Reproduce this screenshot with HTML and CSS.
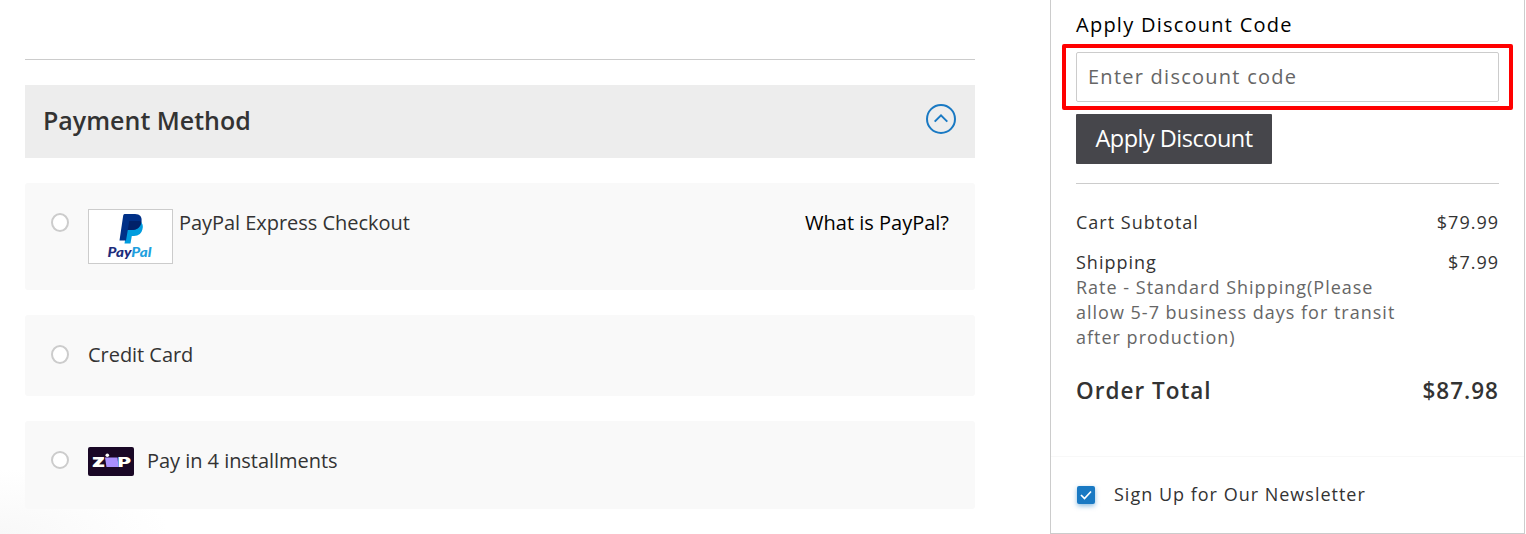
FILE: index.html
```html
<!DOCTYPE html>
<html lang="en">
<head>
    <meta charset="UTF-8">
    <meta name="viewport" content="width=device-width, initial-scale=1.0">
    <title>Checkout</title>

    <link rel="stylesheet" href="styles.css">
</head>
<body>
    <main class="checkout">
        <section class="payment">
            <div class="payment-header">
                <h2>Payment Method</h2>
                <svg class="toggle" width="32" height="32" viewBox="0 0 32 32" fill="none" stroke="#1979c3" stroke-width="2">
                    <circle cx="16" cy="16" r="14"/>
                    <path d="M9.700 18.600 16 12.300l6.300 6.300"/>
                </svg>
            </div>

            <div class="method method-paypal">
                <span class="radio"></span>
                <svg class="paypal-logo" width="85" height="55" viewBox="0 0 85 55">
                    <rect x=".5" y=".5" width="84" height="54" fill="#fff" stroke="#ccc"/>
                    <path fill="#009cde" d="M52 12q4 3 2.400 8.500q-1.500 6.500-8.400 6.500h-2.200l-1.300 7.500h-6l2.500-15z"/>
                    <path fill="#003087" d="M36.500 5h10.500c5 0 7.300 3 6.500 7.500c-1 6-4.500 8.500-10 8.500h-3.700l-1.800 10.500h-6.500l3.700-25q.2-1.500 1.300-1.500z"/>
                    <path fill="#012169" d="M41.300 12h9q2 0 3.200.8c-1 5.700-4.500 8.200-10 8.200h-3.700z"/>
                    <text class="paypal-text" x="19.500" y="47.500" textLength="44" lengthAdjust="spacingAndGlyphs"><tspan fill="#1c2c7c">Pay</tspan><tspan fill="#219fde">Pal</tspan></text>
                </svg>
                <span class="label">PayPal Express Checkout</span>
                <a class="what">What is PayPal?</a>
            </div>

            <div class="method method-card">
                <span class="radio"></span>
                <span class="label">Credit Card</span>
            </div>

            <div class="method method-zip">
                <span class="radio"></span>
                <svg class="zip-logo" width="46" height="29" viewBox="0 0 46 29">
                    <rect width="46" height="29" rx="2" fill="#1a0826"/>
                    <text class="zip-text zip-z" x="3.500" y="20" textLength="14" lengthAdjust="spacingAndGlyphs">z</text>
                    <text class="zip-text" x="29.500" y="20" textLength="13.500" lengthAdjust="spacingAndGlyphs">P</text>
                    <path fill="#aa8fff" d="M17 10.500h12.500L30.500 20H18.500z"/>
                    <circle cx="19.300" cy="8.200" r="1.800" fill="#fffffa"/>
                </svg>
                <span class="label">Pay in 4 installments</span>
            </div>
        </section>

        <aside class="summary">
            <div class="discount">
                <label for="code">Apply Discount Code</label>
                <div class="highlight">
                    <input type="text" id="code" placeholder="Enter discount code">
                </div>
                <button type="button">Apply Discount</button>
            </div>

            <div class="totals">
                <div class="row">
                    <span>Cart Subtotal</span>
                    <span>$79.99</span>
                </div>
                <div class="row shipping">
                    <div>
                        <span>Shipping</span>
                        <p>Rate - Standard Shipping(Please allow 5-7 business days for transit after production)</p>
                    </div>
                    <span>$7.99</span>
                </div>
                <div class="row order-total">
                    <span>Order Total</span>
                    <span>$87.98</span>
                </div>
            </div>

            <div class="newsletter">
                <span class="checkbox">
                    <svg width="18" height="18" viewBox="0 0 18 18" fill="none" stroke="#fff" stroke-width="1.700">
                        <path d="M4 9l3.500 3.500 6.500-7"/>
                    </svg>
                </span>
                <span>Sign Up for Our Newsletter</span>
            </div>
        </aside>
    </main>
</body>
</html>
```
FILE: styles.css
```css
* {
    box-sizing: border-box;
}

body {
    font-family: 'Open Sans', 'Noto Sans', sans-serif;
    font-size: 20px;
    color: #333;
    background: radial-gradient(ellipse 170px 65px at 0 100%, #f8f8f8, #fff);
    margin: 0;
    height: 534px;
    overflow: hidden;
}

.checkout {
    display: flex;
    justify-content: space-between;
    height: 534px;
    padding: 0 1px 0 25px;
}

.payment {
    width: 950px;
    margin-top: 59px;
    border-top: 1px solid #ccc;
    padding-top: 25px;
}

.payment-header {
    height: 73px;
    background-color: #ededed;
    display: flex;
    justify-content: space-between;
    align-items: center;
    padding: 0 18px;
}

.payment-header h2 {
    margin: 0 0 4px;
    font-size: 25px;
    font-weight: 600;
    line-height: 34px;
}

.toggle {
    margin-bottom: 5px;
}

/* Payment options */
.method {
    background-color: #f9f9f9;
    border-radius: 3px;
    margin-top: 25px;
    padding: 26px 26px 0;
    display: flex;
    align-items: flex-start;
    line-height: 28px;
}

.method-paypal {
    height: 107px;
}

.method-card {
    height: 81px;
}

.method-zip {
    height: 88px;
}

.radio {
    width: 18px;
    height: 19px;
    margin: 4px 19px 0 0;
    border: 2px solid #ccc;
    border-radius: 50%;
    background-color: #fff;
}

.method-zip .radio {
    height: 18px;
}

.label {
    letter-spacing: -0.04px;
}

.paypal-logo {
    margin-right: 6px;
}

.paypal-text {
    font-family: 'Lato', sans-serif;
    font-size: 13px;
    font-weight: 900;
    font-style: italic;
}

.zip-logo {
    margin-right: 13px;
}

.zip-text {
    font-family: 'Inter', sans-serif;
    font-size: 13px;
    font-weight: 900;
    fill: #fffffa;
}

.zip-z {
    font-size: 17px;
}

.what {
    color: #000;
    margin-left: auto;
}

/* Order summary */
.summary {
    width: 475px;
    border: 1px solid #ccc;
    border-top: none;
    background-color: #fff;
    font-size: 18px;
    letter-spacing: 1px;
    line-height: 25px;
}

.discount {
    margin: 0 25px;
    height: 184px;
    padding-top: 11px;
    border-bottom: 1px solid #ccc;
}

.discount label {
    display: block;
    color: #000;
    font-size: 20px;
    letter-spacing: 1.25px;
    line-height: 28px;
}

.highlight {
    margin: 5px -14px 4px;
    border: 4px solid #f00;
    border-radius: 2px;
    padding: 4px 10px;
    height: 66px;
}

.highlight input {
    display: block;
    width: 100%;
    height: 50px;
    border: 1px solid #ccc;
    border-radius: 2px;
    padding: 0 11px 2px;
    font: inherit;
    font-size: 20px;
    letter-spacing: 1.25px;
}

.highlight input::placeholder {
    color: #666;
}

.discount button {
    display: block;
    width: 196px;
    height: 50px;
    padding: 0 0 3px;
    border: none;
    border-radius: 1px;
    background-color: #46464b;
    color: #fff;
    font-family: inherit;
    font-size: 23.5px;
    letter-spacing: -0.5px;
}

.totals {
    height: 273px;
    padding: 26px 25px 0;
    border-bottom: 1px solid #f8f8f8;
}

.row {
    display: flex;
    justify-content: space-between;
}

.shipping {
    margin-top: 15px;
}

.shipping p {
    width: 335px;
    margin: 0;
    color: #666;
}

.order-total {
    margin-top: 24px;
    font-size: 22.5px;
    font-weight: 600;
    line-height: 34px;
}

.newsletter {
    display: flex;
    align-items: center;
    height: 75px;
    padding: 0 26px;
}

.checkbox {
    width: 18px;
    height: 18px;
    margin-right: 19px;
    border-radius: 2px;
    background-color: #1979c3;
    box-shadow: 0 2px 5px rgba(25, 121, 195, 0.5);
}

.checkbox svg {
    display: block;
}
```
